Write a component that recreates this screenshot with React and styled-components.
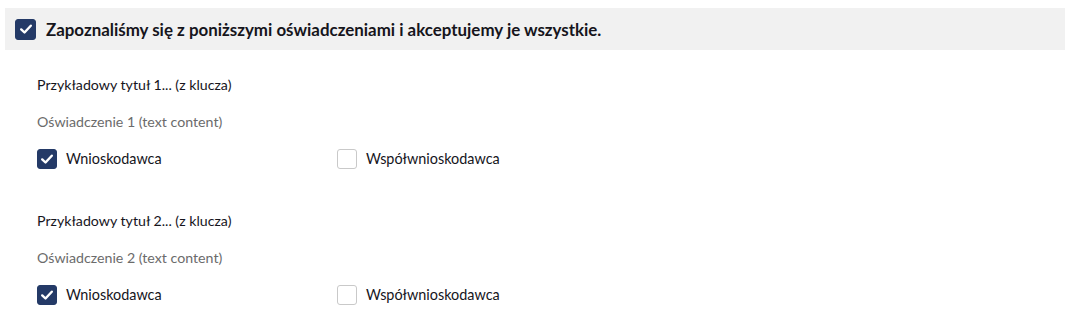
import React, { useState } from "react";
import styled, { createGlobalStyle } from "styled-components";

const GlobalStyle = createGlobalStyle`
  body {
    margin: 0;
    background: #ffffff;
    font-family: Lato, "Noto Sans", sans-serif;
    color: #1c1b22;
  }
`;

const statements = [
  { id: 1, title: "Przykładowy tytuł 1... (z klucza)", text: "Oświadczenie 1 (text content)" },
  { id: 2, title: "Przykładowy tytuł 2... (z klucza)", text: "Oświadczenie 2 (text content)" },
];

function Check({ checked, big, onClick }) {
  return (
    <Box $checked={checked} $big={big} onClick={onClick}>
      {checked && (
        <svg width="14" height="14" viewBox="0 0 14 14">
          <path d="M2.2 7.4 L5.5 10.5 L11.8 3.7" fill="none" stroke="#fff" strokeWidth="2.4" strokeLinecap="round" strokeLinejoin="round" />
        </svg>
      )}
    </Box>
  );
}

export default function App() {
  const [all, setAll] = useState(true);
  const [state, setState] = useState({ 1: [true, false], 2: [true, false] });

  const toggle = (id, i) =>
    setState((s) => {
      const next = [...s[id]];
      next[i] = !next[i];
      return { ...s, [id]: next };
    });

  return (
    <Page>
      <GlobalStyle />
      <Header>
        <Check big checked={all} onClick={() => setAll(!all)} />
        <HeaderText>Zapoznaliśmy się z poniższymi oświadczeniami i akceptujemy je wszystkie.</HeaderText>
      </Header>
      {statements.map((st) => (
        <Section key={st.id}>
          <Title>{st.title}</Title>
          <Statement>{st.text}</Statement>
          <Options>
            <Option>
              <Check checked={state[st.id][0]} onClick={() => toggle(st.id, 0)} />
              <Label>Wnioskodawca</Label>
            </Option>
            <Option>
              <Check checked={state[st.id][1]} onClick={() => toggle(st.id, 1)} />
              <Label>Współwnioskodawca</Label>
            </Option>
          </Options>
        </Section>
      ))}
    </Page>
  );
}

const Page = styled.div`
  padding-top: 8px;
`;

const Header = styled.div`
  margin: 0 8px 0 5px;
  height: 42px;
  background: #f1f1f1;
  display: flex;
  align-items: center;
  gap: 10px;
  padding-left: 10px;
`;

const HeaderText = styled.span`
  font-size: 16.9px;
  font-weight: 700;
  color: #16151c;
`;

const Box = styled.span`
  flex: none;
  box-sizing: border-box;
  width: ${(p) => (p.$big ? "21px" : "20px")};
  height: ${(p) => (p.$big ? "21px" : "20px")};
  border-radius: 3px;
  background: ${(p) => (p.$checked ? "#243a67" : "#fff")};
  border: 1px solid ${(p) => (p.$checked ? "#243a67" : "#c9c9c9")};
  display: flex;
  align-items: center;
  justify-content: center;
  cursor: pointer;
`;

const Section = styled.section`
  padding-left: 37px;
  margin-top: 25px;
  display: flex;
  flex-direction: column;
  gap: 17px;

  & + & {
    margin-top: 42px;
  }
`;

const Title = styled.div`
  font-size: 14.2px;
  line-height: 20px;
  color: #16151c;
`;

const Statement = styled.div`
  font-size: 14.2px;
  line-height: 20px;
  color: #6b6b6b;
`;

const Options = styled.div`
  display: grid;
  grid-template-columns: 300px auto;
  align-items: center;
`;

const Option = styled.label`
  display: flex;
  align-items: center;
  gap: 9px;
`;

const Label = styled.span`
  font-size: 14.4px;
  line-height: 20px;
  color: #16151c;
`;
